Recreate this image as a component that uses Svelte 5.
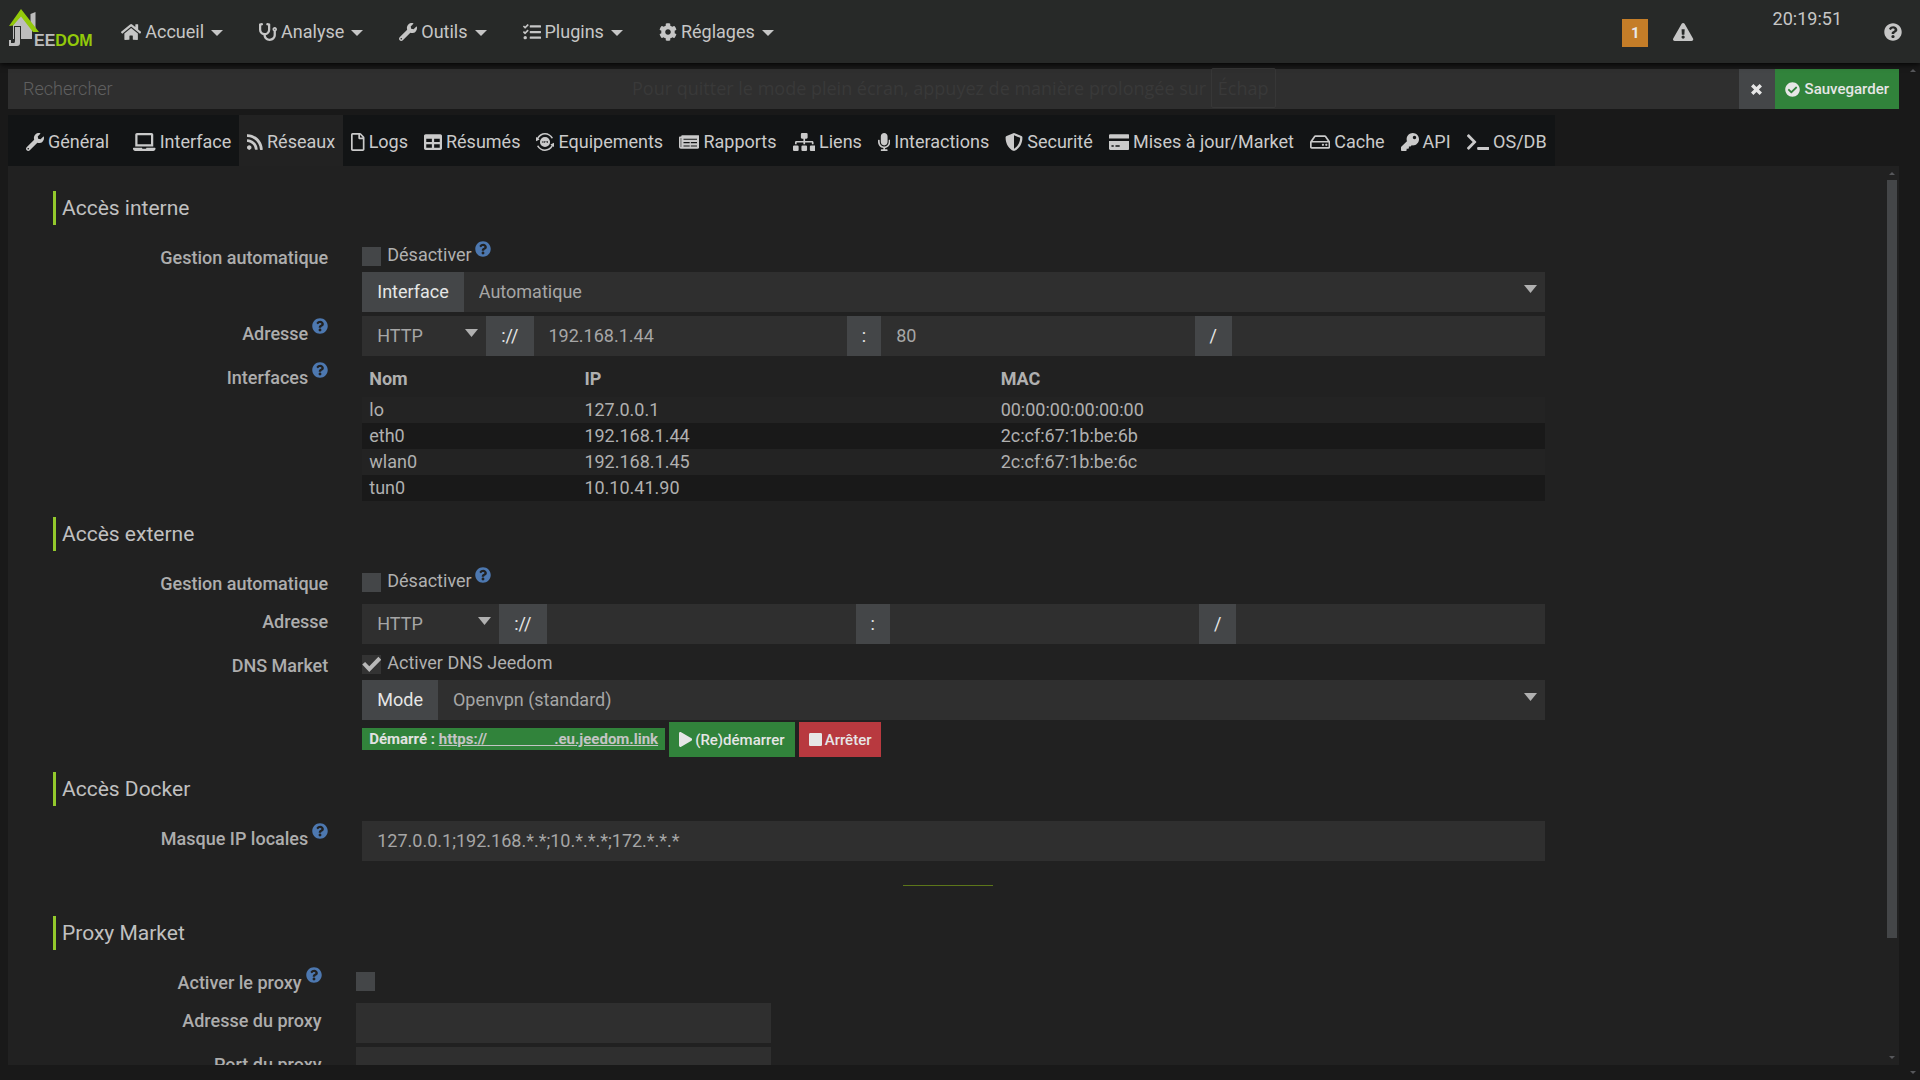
<script>
  const icons = {
    home: ['0 0 576 512', 'M280.37 148.26L96 300.11V464a16 16 0 0 0 16 16l112.06-.29a16 16 0 0 0 15.92-16V368a16 16 0 0 1 16-16h64a16 16 0 0 1 16 16v95.64a16 16 0 0 0 16 16.05L464 480a16 16 0 0 0 16-16V300L295.67 148.26a12.19 12.19 0 0 0-15.3 0zM571.6 251.47L488 182.56V44.05a12 12 0 0 0-12-12h-56a12 12 0 0 0-12 12v72.61L318.47 43a48 48 0 0 0-61 0L4.34 251.47a12 12 0 0 0-1.6 16.9l25.5 31A12 12 0 0 0 45.15 301l235.22-193.74a12.19 12.19 0 0 1 15.3 0L530.9 301a12 12 0 0 0 16.9-1.6l25.5-31a12 12 0 0 0-1.7-16.93z'],
    stethoscope: ['0 0 512 512', 'M447.1 112c-34.2.5-62.3 28.4-63 62.6-.5 24.3 12.5 45.6 32 56.8V344c0 57.3-50.2 104-112 104-60 0-109.2-44.1-111.9-99.2C265 333.8 320 269.2 320 192V36.6c0-11.4-8.1-21.3-19.3-23.5L237.8.5c-13-2.6-25.6 5.8-28.2 18.8L206.4 35c-2.6 13 5.8 25.6 18.8 28.2l30.7 6.1v121.4c0 52.9-42.2 96.7-95.1 97.2-53.4.5-96.9-42.7-96.9-96V69.4l30.7-6.1c13-2.6 21.4-15.2 18.8-28.2l-3.1-15.7C107.7 6.4 95.1-2 82.1.6L19.3 13C8.1 15.3 0 25.1 0 36.6V192c0 77.3 55.1 142 128.1 156.8C130.7 439.2 208.6 512 304 512c97 0 176-75.4 176-168V231.4c19.1-11.1 32-31.7 32-55.4 0-35.7-29.2-64.5-64.9-64zm.9 80c-8.8 0-16-7.2-16-16s7.2-16 16-16 16 7.2 16 16-7.2 16-16 16z'],
    wrench: ['0 0 512 512', 'M507.73 109.1c-2.24-9.03-13.54-12.09-20.12-5.51l-74.36 74.36-67.88-11.31-11.31-67.88 74.36-74.36c6.62-6.62 3.43-17.9-5.66-20.16-47.38-11.74-99.55.91-136.58 37.93-39.64 39.64-50.55 97.1-34.05 147.2L18.74 402.76c-24.99 24.99-24.99 65.51 0 90.5 24.99 24.99 65.51 24.99 90.5 0l213.21-213.21c50.12 16.71 107.47 5.68 147.37-34.22 37.07-37.07 49.7-89.32 37.91-136.73zM64 472c-13.25 0-24-10.75-24-24 0-13.26 10.75-24 24-24s24 10.74 24 24c0 13.25-10.75 24-24 24z'],
    tasks: ['0 0 512 512', 'M139.61 35.5a12 12 0 0 0-17 0L58.93 98.81l-22.7-22.12a12 12 0 0 0-17 0L3.53 92.41a12 12 0 0 0 0 17l47.59 47.4a12.78 12.78 0 0 0 17.61 0l15.59-15.62L156.52 69a12.09 12.09 0 0 0 .09-17zm0 159.19a12 12 0 0 0-17 0l-63.68 63.72-22.7-22.1a12 12 0 0 0-17 0L3.53 252a12 12 0 0 0 0 17L51 316.5a12.77 12.77 0 0 0 17.6 0l15.7-15.69 72.2-72.22a12 12 0 0 0 .09-16.9zM64 368c-26.49 0-48.59 21.5-48.59 48S37.53 464 64 464a48 48 0 0 0 0-96zm432 16H208a16 16 0 0 0-16 16v32a16 16 0 0 0 16 16h288a16 16 0 0 0 16-16v-32a16 16 0 0 0-16-16zm0-320H208a16 16 0 0 0-16 16v32a16 16 0 0 0 16 16h288a16 16 0 0 0 16-16V80a16 16 0 0 0-16-16zm0 160H208a16 16 0 0 0-16 16v32a16 16 0 0 0 16 16h288a16 16 0 0 0 16-16v-32a16 16 0 0 0-16-16z'],
    cog: ['0 0 512 512', 'M487.4 315.7l-42.6-24.6c4.3-23.2 4.3-47 0-70.2l42.6-24.6c4.9-2.8 7.1-8.6 5.5-14-11.1-35.6-30-67.8-54.7-94.6-3.8-4.1-10-5.1-14.8-2.3L380.8 110c-17.9-15.4-38.5-27.3-60.8-35.1V25.8c0-5.6-3.9-10.5-9.4-11.7-36.7-8.2-74.3-7.8-109.2 0-5.5 1.2-9.4 6.1-9.4 11.7V75c-22.2 7.9-42.8 19.8-60.8 35.1L88.7 85.5c-4.9-2.8-11-1.9-14.8 2.3-24.7 26.7-43.6 58.9-54.7 94.6-1.7 5.4.6 11.2 5.5 14L67.3 221c-4.3 23.2-4.3 47 0 70.2l-42.6 24.6c-4.9 2.8-7.1 8.6-5.5 14 11.1 35.6 30 67.8 54.7 94.6 3.8 4.1 10 5.1 14.8 2.3l42.6-24.6c17.9 15.4 38.5 27.3 60.8 35.1v49.2c0 5.6 3.9 10.5 9.4 11.7 36.7 8.2 74.3 7.8 109.2 0 5.5-1.2 9.4-6.1 9.4-11.7v-49.2c22.2-7.9 42.8-19.8 60.8-35.1l42.6 24.6c4.9 2.8 11 1.9 14.8-2.3 24.7-26.7 43.6-58.9 54.7-94.6 1.5-5.5-.7-11.3-5.6-14.1zM256 336c-44.1 0-80-35.9-80-80s35.9-80 80-80 80 35.9 80 80-35.9 80-80 80z'],
    laptop: ['0 0 640 512', 'M624 416H381.54c-.74 19.81-14.71 32-32.74 32H288c-18.69 0-33.02-17.47-32.77-32H16c-8.8 0-16 7.2-16 16v16c0 35.2 28.8 64 64 64h512c35.2 0 64-28.8 64-64v-16c0-8.8-7.2-16-16-16zM576 48c0-26.4-21.6-48-48-48H112C85.6 0 64 21.6 64 48v336h512V48zm-64 272H128V64h384v256z'],
    rss: ['0 0 448 512', 'M128.081 415.959c0 35.369-28.672 64.041-64.041 64.041S0 451.328 0 415.959s28.672-64.041 64.041-64.041 64.04 28.673 64.04 64.041zm175.66 47.25c-8.354-154.6-132.185-278.587-286.95-286.95C7.656 175.765 0 183.105 0 192.253v48.069c0 8.415 6.49 15.472 14.887 16.018 111.832 7.284 201.473 96.702 208.772 208.772.547 8.397 7.604 14.887 16.018 14.887h48.069c9.149.001 16.489-7.655 15.995-16.79zm144.249.288C439.596 229.677 251.465 40.445 16.503 32.01 7.473 31.686 0 38.981 0 48.016v48.068c0 8.625 6.835 15.645 15.453 15.999 191.179 7.839 344.627 161.316 352.465 352.465.353 8.618 7.373 15.453 15.999 15.453h48.068c9.034-.001 16.329-7.474 16.005-16.504z'],
    file: ['0 0 384 512', 'M369.9 97.9L286 14C277 5 264.8-.1 252.1-.1H48C21.5 0 0 21.5 0 48v416c0 26.5 21.5 48 48 48h288c26.5 0 48-21.5 48-48V131.9c0-12.7-5.1-25-14.1-34zM332.1 128H256V51.9l76.1 76.1zM48 464V48h160v104c0 13.3 10.7 24 24 24h104v288H48z'],
    table: ['0 0 512 512', 'M464 32H48C21.49 32 0 53.49 0 80v352c0 26.51 21.49 48 48 48h416c26.51 0 48-21.49 48-48V80c0-26.51-21.49-48-48-48zM224 416H64v-96h160v96zm0-160H64v-96h160v96zm224 160H288v-96h160v96zm0-160H288v-96h160v96z'],
    sync: ['0 0 512 512', 'M256 0C160 0 78 52 34 132L0 112v120l104-50-34-20C106 92 176 44 256 44c80 0 148 44 186 114l44-16C440 58 352 0 256 0zM512 280l-104 50 34 20c-36 70-106 118-186 118S108 424 70 354l-44 16C72 454 160 512 256 512c96 0 178-52 222-132l34 20zM256 112a144 144 0 1 0 0 288 144 144 0 1 0 0-288zM168 226h50v18h-50zM236 226h18v60h-18zM274 226h18v24h26v-24h18v60h-18v-20h-44zM168 268h50v18h-50z'],
    newspaper: ['0 0 576 512', 'M552 64H88c-13 0-24 11-24 24v8H24c-13 0-24 11-24 24v272c0 31 25 56 56 56h472c26 0 48-22 48-48V88c0-13-11-24-24-24zM56 400a8 8 0 0 1-8-8V144h16v248a8 8 0 0 1-8 8zM128 352h176v32H128zM336 352h176v32H336zM128 256h176v32H128zM336 256h176v32H336zM128 160h384v32H128z'],
    sitemap: ['0 0 640 512', 'M128 352H32a32 32 0 0 0-32 32v96a32 32 0 0 0 32 32h96a32 32 0 0 0 32-32v-96a32 32 0 0 0-32-32zm-24-80h192v48h48v-48h192v48h48v-57c0-22-17-39-39-39H344v-64h40a32 32 0 0 0 32-32V32a32 32 0 0 0-32-32H256a32 32 0 0 0-32 32v96a32 32 0 0 0 32 32h40v64H95c-22 0-39 17-39 39v57h48zm264 80h-96a32 32 0 0 0-32 32v96a32 32 0 0 0 32 32h96a32 32 0 0 0 32-32v-96a32 32 0 0 0-32-32zm240 0h-96a32 32 0 0 0-32 32v96a32 32 0 0 0 32 32h96a32 32 0 0 0 32-32v-96a32 32 0 0 0-32-32z'],
    microphone: ['0 0 352 512', 'M176 352c53.02 0 96-42.98 96-96V96c0-53.02-42.98-96-96-96S80 42.98 80 96v160c0 53.02 42.98 96 96 96zm160-160h-16c-8.84 0-16 7.16-16 16v48c0 74.8-64.49 134.82-140.79 127.38C96.71 376.89 48 317.11 48 250.3V208c0-8.84-7.16-16-16-16H16c-8.84 0-16 7.16-16 16v40.16c0 89.64 63.97 169.55 152 181.69V464H96c-8.84 0-16 7.16-16 16v16c0 8.84 7.16 16 16 16h160c8.84 0 16-7.16 16-16v-16c0-8.84-7.16-16-16-16h-56v-33.77C285.71 418.47 352 344.9 352 256v-48c0-8.84-7.16-16-16-16z'],
    shield: ['0 0 512 512', 'M466.5 83.7l-192-80a48.15 48.15 0 0 0-36.9 0l-192 80C27.7 91.1 16 108.6 16 128c0 198.5 114.5 335.7 221.5 380.3 11.8 4.9 25.1 4.9 36.9 0C360.1 472.6 496 349.3 496 128c0-19.4-11.7-36.9-29.5-44.3zM256.1 446.3l-.1-381 175.9 73.3c-3.3 151.4-82.1 261.1-175.8 307.7z'],
    card: ['0 0 576 512', 'M32 32h512a32 32 0 0 1 32 32v90H0V64a32 32 0 0 1 32-32zM0 230h576v218a32 32 0 0 1-32 32H32a32 32 0 0 1-32-32zM70 350v44h64v-44zM184 350v44h120v-44z'],
    hdd: ['0 0 576 512', 'M567.403 235.642L462.323 84.589A48 48 0 0 0 422.919 64H153.081a48 48 0 0 0-39.404 20.589L8.597 235.642A48.001 48.001 0 0 0 0 263.054V400c0 26.51 21.49 48 48 48h480c26.51 0 48-21.49 48-48V263.054c0-9.801-3-19.366-8.597-27.412zM153.081 112h269.838l77.913 112H75.168l77.913-112zM528 400H48V272h480v128zm-32-64c0 17.673-14.327 32-32 32s-32-14.327-32-32 14.327-32 32-32 32 14.327 32 32zm-96 0c0 17.673-14.327 32-32 32s-32-14.327-32-32 14.327-32 32-32 32 14.327 32 32z'],
    key: ['0 0 512 512', 'M512 176.001C512 273.203 433.202 352 336 352c-11.22 0-22.19-1.062-32.827-3.069l-24.012 27.014A23.999 23.999 0 0 1 261.223 384H224v40c0 13.255-10.745 24-24 24h-40v40c0 13.255-10.745 24-24 24H24c-13.255 0-24-10.745-24-24v-78.059c0-6.365 2.529-12.47 7.029-16.971l161.802-161.802C163.108 213.814 160 195.271 160 176 160 78.798 238.797.001 335.999 0 433.488-.001 512 78.511 512 176.001zM336 128c0 26.51 21.49 48 48 48s48-21.49 48-48-21.49-48-48-48-48 21.49-48 48z'],
    terminal: ['0 0 640 512', 'M257.981 272.971L63.638 467.314c-9.373 9.373-24.569 9.373-33.941 0L7.029 444.647c-9.357-9.357-9.375-24.522-.04-33.901L161.011 256 6.99 101.255c-9.335-9.379-9.317-24.544.04-33.901l22.667-22.667c9.373-9.373 24.569-9.373 33.941 0L257.981 239.03c9.373 9.372 9.373 24.568 0 33.941zM640 456v-32c0-13.255-10.745-24-24-24H312c-13.255 0-24 10.745-24 24v32c0 13.255 10.745 24 24 24h304c13.255 0 24-10.745 24-24z'],
    warning: ['0 0 576 512', 'M569.517 440.013C587.975 472.007 564.806 512 527.94 512H48.054c-36.937 0-59.999-40.055-41.577-71.987L246.423 23.985c18.467-32.009 64.72-31.951 83.154 0l239.94 416.028zM288 354c-25.405 0-46 20.595-46 46s20.595 46 46 46 46-20.595 46-46-20.595-46-46-46zm-43.673-165.346l7.418 136c.347 6.364 5.609 11.346 11.982 11.346h48.546c6.373 0 11.635-4.982 11.982-11.346l7.418-136c.375-6.874-5.098-12.654-11.982-12.654h-63.383c-6.884 0-12.356 5.78-11.981 12.654z'],
    question: ['0 0 512 512', 'M504 256c0 136.997-111.043 248-248 248S8 392.997 8 256C8 119.083 119.043 8 256 8s248 111.083 248 248zM262.655 90c-54.497 0-89.255 22.957-116.549 63.758-3.536 5.286-2.353 12.415 2.715 16.258l34.699 26.31c5.205 3.947 12.621 3.008 16.665-2.122 17.864-22.658 30.113-35.797 57.303-35.797 20.429 0 45.698 13.148 45.698 32.958 0 14.976-12.363 22.667-32.534 33.976C247.128 238.528 216 254.941 216 296v4c0 6.627 5.373 12 12 12h56c6.627 0 12-5.373 12-12v-1.333c0-28.462 83.186-29.647 83.186-106.667 0-58.002-60.165-102-116.531-102zM256 338c-25.365 0-46 20.635-46 46 0 25.364 20.635 46 46 46s46-20.636 46-46c0-25.365-20.635-46-46-46z'],
    check: ['0 0 512 512', 'M504 256c0 136.967-111.033 248-248 248S8 392.967 8 256 119.033 8 256 8s248 111.033 248 248zM227.314 387.314l184-184c6.248-6.248 6.248-16.379 0-22.627l-22.627-22.627c-6.248-6.249-16.379-6.249-22.628 0L216 308.118l-70.059-70.059c-6.248-6.248-16.379-6.248-22.628 0l-22.627 22.627c-6.248 6.248-6.248 16.379 0 22.627l104 104c6.249 6.249 16.379 6.249 22.628.001z'],
    times: ['0 0 12 12', 'M2.6 0L6 3.4 9.4 0 12 2.6 8.6 6 12 9.4 9.4 12 6 8.6 2.6 12 0 9.4 3.4 6 0 2.6z'],
    play: ['0 0 448 512', 'M424.4 214.7L72.4 6.6C43.8-10.3 0 6.1 0 47.9V464c0 37.5 40.7 60.1 72.4 41.3l352-208c31.4-18.5 31.5-64.1 0-82.6z'],
    stop: ['0 0 448 512', 'M400 32H48C21.5 32 0 53.5 0 80v352c0 26.5 21.5 48 48 48h352c26.5 0 48-21.5 48-48V80c0-26.5-21.5-48-48-48z'],
    caret: ['0 0 12 6', 'M0 0h12L6 6z'],
    arrow: ['0 0 13 8', 'M0 0h13L6.5 8z'],
    up: ['0 0 6 3', 'M0 3h6L3 0z'],
    down: ['0 0 6 3', 'M0 0h6L3 3z']
  };

  const menu = [
    ['home', 'Accueil'],
    ['stethoscope', 'Analyse'],
    ['wrench', 'Outils'],
    ['tasks', 'Plugins'],
    ['cog', 'Réglages']
  ];

  const tabs = [
    ['wrench', 'Général'],
    ['laptop', 'Interface'],
    ['rss', 'Réseaux'],
    ['file', 'Logs'],
    ['table', 'Résumés'],
    ['sync', 'Equipements'],
    ['newspaper', 'Rapports'],
    ['sitemap', 'Liens'],
    ['microphone', 'Interactions'],
    ['shield', 'Securité'],
    ['card', 'Mises à jour/Market'],
    ['hdd', 'Cache'],
    ['key', 'API'],
    ['terminal', 'OS/DB']
  ];

  const interfaces = [
    ['lo', '127.0.0.1', '00:00:00:00:00:00'],
    ['eth0', '192.168.1.44', '2c:cf:67:1b:be:6b'],
    ['wlan0', '192.168.1.45', '2c:cf:67:1b:be:6c'],
    ['tun0', '10.10.41.90', '']
  ];

  const hiddenHost = '\u00a0'.repeat(18);
  let active = $state('Réseaux');
</script>

{#snippet icon(name, kind = '')}
  <svg class="icon {name} {kind}" viewBox={icons[name][0]} aria-hidden="true">
    <path fill-rule="evenodd" d={icons[name][1]} />
  </svg>
{/snippet}

{#snippet protocol(id)}
  <div class="select">
    <select {id}><option>HTTP</option><option>HTTPS</option></select>
    {@render icon('arrow')}
  </div>
{/snippet}

<div class="page">
  <header>
    <a class="logo" href="#accueil" aria-label="Jeedom">
      <svg viewBox="0 0 86 40" aria-hidden="true">
        <path fill="#bdbdbd" d="M22.5 6l5-2v16h-5zM5 17l8-10 11 13v11H5z" />
        <path fill="#272928" d="M6 18h7v13H6z" />
        <path fill="#bdbdbd" d="M8 14h4v3H8zM7 19h5v16q0 3-3 3H1v-6h2v3h3q1 0 1-2z" />
        <path fill="#93c90a" d="M13 1l18 23h-6L13 8.500 5 17.500 1 18z" />
        <text x="26" y="38" class="mark">EE<tspan class="green">DOM</tspan></text>
      </svg>
    </a>
    <nav class="menu">
      {#each menu as [name, label]}
        <button>{@render icon(name)}<span>{label}</span>{@render icon('caret')}</button>
      {/each}
    </nav>
    <div class="status">
      <span class="badge">1</span>
      <button aria-label="Messages">{@render icon('warning')}</button>
      <time>20:19:51</time>
      <button aria-label="Aide">{@render icon('question')}</button>
    </div>
  </header>

  <div class="body">
    <main>
      <div class="search">
        <input type="text" placeholder="Rechercher" aria-label="Rechercher" />
        <button class="clear" aria-label="Effacer">{@render icon('times')}</button>
        <button class="save">{@render icon('check')}<span>Sauvegarder</span></button>
        <p class="hint">Pour quitter le mode plein écran, appuyez de manière prolongée sur <kbd>Échap</kbd></p>
      </div>

      <div class="tabs" role="tablist">
        {#each tabs as [name, label]}
          <button role="tab" aria-selected={active === label} class:active={active === label} onclick={() => (active = label)}>
            {@render icon(name)}<span>{label}</span>
          </button>
        {/each}
      </div>

      <div class="panel">
        <form>
          <h2>Accès interne</h2>
          <div class="row">
            <label class="name" for="int-auto">Gestion automatique</label>
            <div>
              <div class="check">
                <input type="checkbox" id="int-auto" />
                <label for="int-auto">Désactiver</label>{@render icon('question', 'help')}
              </div>
              <div class="group">
                <label class="addon" for="int-if">Interface</label>
                <div class="select grow">
                  <select id="int-if"><option>Automatique</option></select>
                  {@render icon('arrow')}
                </div>
              </div>
            </div>
          </div>
          <div class="row">
            <label class="name" for="int-proto">Adresse{@render icon('question', 'help')}</label>
            <div class="group address">
              {@render protocol('int-proto')}
              <span class="addon">://</span>
              <input type="text" value="192.168.1.44" aria-label="Hôte interne" />
              <span class="addon">:</span>
              <input type="text" value="80" aria-label="Port interne" />
              <span class="addon">/</span>
              <input type="text" aria-label="Chemin interne" />
            </div>
          </div>
          <div class="row">
            <span class="name">Interfaces{@render icon('question', 'help')}</span>
            <table>
              <thead>
                <tr><th class="c1">Nom</th><th class="c2">IP</th><th>MAC</th></tr>
              </thead>
              <tbody>
                {#each interfaces as cells}
                  <tr>{#each cells as cell}<td>{cell}</td>{/each}</tr>
                {/each}
              </tbody>
            </table>
          </div>

          <h2>Accès externe</h2>
          <div class="row">
            <label class="name" for="ext-auto">Gestion automatique</label>
            <div class="check">
              <input type="checkbox" id="ext-auto" />
              <label for="ext-auto">Désactiver</label>{@render icon('question', 'help')}
            </div>
          </div>
          <div class="row">
            <label class="name" for="ext-proto">Adresse</label>
            <div class="group address wide">
              {@render protocol('ext-proto')}
              <span class="addon">://</span>
              <input type="text" aria-label="Hôte externe" />
              <span class="addon">:</span>
              <input type="text" aria-label="Port externe" />
              <span class="addon">/</span>
              <input type="text" aria-label="Chemin externe" />
            </div>
          </div>
          <div class="row">
            <label class="name" for="dns">DNS Market</label>
            <div>
              <div class="check">
                <input type="checkbox" id="dns" checked />
                <label for="dns">Activer DNS Jeedom</label>
              </div>
              <div class="group">
                <label class="addon" for="dns-mode">Mode</label>
                <div class="select grow">
                  <select id="dns-mode"><option>Openvpn (standard)</option></select>
                  {@render icon('arrow')}
                </div>
              </div>
              <div class="actions">
                <span class="state">Démarré : <a href="#dns">https://{hiddenHost}.eu.jeedom.link</a></span>
                <button type="button" class="start">{@render icon('play')}<span>(Re)démarrer</span></button>
                <button type="button" class="stop-btn">{@render icon('stop')}<span>Arrêter</span></button>
              </div>
            </div>
          </div>

          <h2>Accès Docker</h2>
          <div class="row">
            <label class="name" for="mask">Masque IP locales{@render icon('question', 'help')}</label>
            <input type="text" id="mask" value="127.0.0.1;192.168.*.*;10.*.*.*;172.*.*.*" />
          </div>

          <hr />

          <div class="proxy">
            <h2>Proxy Market</h2>
            <div class="row">
              <label class="name" for="proxy-on">Activer le proxy{@render icon('question', 'help')}</label>
              <div class="check"><input type="checkbox" id="proxy-on" /></div>
            </div>
            <div class="row">
              <label class="name" for="proxy-addr">Adresse du proxy</label>
              <input type="text" id="proxy-addr" />
            </div>
            <div class="row">
              <label class="name" for="proxy-port">Port du proxy</label>
              <input type="text" id="proxy-port" />
            </div>
          </div>
        </form>
        <div class="scroll">
          {@render icon('up')}
          <div class="track"><div class="thumb"></div></div>
          {@render icon('down')}
        </div>
      </div>
    </main>
    <div class="gutter">{@render icon('up')}{@render icon('down')}</div>
  </div>
</div>

<style>
  :global(body) {
    background: #191919;
    font-family: Roboto, 'Liberation Sans', sans-serif;
    font-size: 18px;
    color: #b0b0b0;
  }
  .page {
    display: flex;
    flex-direction: column;
    height: 100vh;
    overflow: hidden;
  }
  button, input, select {
    box-sizing: border-box;
    margin: 0;
    padding: 0;
    border: 0;
    border-radius: 0;
    outline: 0;
    background: none;
    color: inherit;
    font: inherit;
    min-width: 0;
  }
  button {
    display: flex;
    align-items: center;
    cursor: pointer;
  }
  .icon {
    display: block;
    flex: none;
    height: 18px;
    fill: currentColor;
  }
  .icon.caret { height: 6px; width: 12px; margin: 3px 0 0 3px; }
  .icon.help { height: 16px; color: #4d78b0; padding-bottom: 14px; }
  .icon.up, .icon.down { height: 3px; width: 6px; color: #56575a; }

  header {
    display: flex;
    align-items: center;
    flex: none;
    height: 63px;
    padding: 0 18px 0 8px;
    background: #272928;
    color: #c6c6c6;
    box-shadow: 0 1px 6px #000000;
    z-index: 1;
  }
  .logo { width: 86px; margin-right: 27px; padding-bottom: 8px; }
  .logo svg { display: block; height: 40px; width: 86px; }
  .mark { font: 700 16px 'Liberation Sans', sans-serif; fill: #bdbdbd; }
  .mark .green { fill: #93c90a; }
  .menu { display: flex; gap: 36px; flex: 1; }
  .menu button { gap: 4px; }
  .status { display: flex; align-items: center; }
  .badge {
    width: 26px;
    line-height: 28px;
    margin: 3px 25px 0 0;
    background: #c47d28;
    color: #e8e8e8;
    font-size: 15px;
    font-weight: 700;
    text-align: center;
  }
  time { margin: 0 42px 26px 79px; }

  .body { display: flex; flex: 1; min-height: 0; }
  main {
    display: flex;
    flex-direction: column;
    flex: 1;
    min-width: 0;
    padding: 6px 0 15px 8px;
  }
  .gutter {
    display: flex;
    flex-direction: column;
    justify-content: space-between;
    align-items: center;
    box-sizing: border-box;
    width: 21px;
    padding: 6px 0 6px 7px;
  }
  .search { position: relative; display: flex; flex: none; height: 40px; }
  .search input { flex: 1; padding: 0 15px 2px; background: #2f2f2f; }
  .search input::placeholder { color: #606060; font-weight: 300; opacity: 1; }
  .clear { justify-content: center; width: 36px; background: #444648; color: #e6e6e6; }
  .clear .icon { height: 11px; }
  .save { gap: 5px; padding: 0 10px; background: #31833b; color: #e6e6e6; font-size: 15px; font-weight: 500; }
  .save .icon { height: 15px; }
  .hint {
    position: absolute;
    inset: -1px 0 0 33%;
    width: max-content;
    margin: 0;
    line-height: 38px;
    font-family: 'Open Sans', 'Noto Sans', sans-serif;
    font-size: 18px;
    color: #393939;
    pointer-events: none;
  }
  kbd {
    display: inline-block;
    padding: 0 6px;
    border: 1px solid #373737;
    border-radius: 2px;
    font: inherit;
  }

  .tabs {
    display: flex;
    flex: none;
    align-self: flex-start;
    height: 51px;
    margin-top: 6px;
    padding-left: 10px;
    background: #121415;
    color: #cacaca;
  }
  .tabs button { gap: 4px; padding: 2px 8px 0; border-bottom: 1px solid transparent; margin-bottom: -1px; }
  .tabs button:first-child { margin-right: 8px; }
  .tabs .active { background: #222222; border-color: #93c90a; }

  .panel { display: flex; flex: 1; min-height: 0; overflow: hidden; background: #212121; }
  form { flex: 1; min-width: 0; padding-top: 25px; }
  .scroll {
    display: flex;
    flex-direction: column;
    align-items: center;
    gap: 5px;
    width: 10px;
    padding: 6px 2px 6px 0;
  }
  .track { flex: 1; width: 10px; }
  .thumb { height: 87%; background: #444648; }
  h2 {
    margin: 15px 0 15px 45px;
    padding-left: 6px;
    border-left: 3px solid #93c92c;
    line-height: 34px;
    font-size: 21px;
    font-weight: 400;
    color: #c0c0c0;
  }
  form > h2:first-child { margin-top: 0; }
  .row {
    display: grid;
    grid-template-columns: 17% 63%;
    column-gap: 34px;
    margin-bottom: 4px;
    padding-left: 1px;
    align-items: start;
  }
  .row:has(+ h2), .row:has(+ hr) { margin-bottom: 0; }
  .name {
    display: flex;
    align-items: center;
    justify-content: flex-end;
    gap: 4px;
    height: 34px;
    font-weight: 500;
    color: #adadad;
  }
  .row input[type='text'], select {
    height: 40px;
    width: 100%;
    padding: 0 15px 2px;
    background: #2f2f2f;
    color: #a6a6a6;
  }
  .check { display: flex; align-items: center; height: 32px; }
  .check label { margin: 0 3px 0 6px; padding-bottom: 3px; }
  .check input {
    appearance: none;
    width: 19px;
    height: 19px;
    background: #444648;
  }
  .check input:checked { background: #333333; }
  .check input:checked::after {
    content: '';
    display: block;
    height: 19px;
    background: #b8b8b8;
    clip-path: polygon(0 52%, 15% 40%, 37% 62%, 85% 12%, 100% 28%, 37% 92%);
  }
  .group { display: flex; }
  .grow { flex: 1; }
  .address { display: grid; grid-template-columns: 124px auto 1fr auto 1fr auto 1fr; }
  .address.wide { grid-template-columns: 137px auto 1fr auto 1fr auto 1fr; }
  .addon {
    padding: 0 15px;
    line-height: 40px;
    background: #444648;
    color: #e6e6e6;
  }
  .select { display: grid; }
  .select > :global(*) { grid-area: 1 / 1; }
  select { appearance: none; }
  .select .icon {
    width: 13px;
    height: 8px;
    margin: 13px 8px 0 0;
    justify-self: end;
    pointer-events: none;
  }
  table { width: 100%; margin-bottom: 1px; border-collapse: collapse; table-layout: fixed; line-height: 26px; }
  th, td { height: 26px; padding: 0 7px; text-align: left; }
  th { height: 37px; font-weight: 700; }
  .c1 { width: 17%; }
  .c2 { width: 34%; }
  tbody tr { background: #232323; }
  tbody tr:nth-child(even) { background: #191919; }
  .actions { display: flex; align-items: flex-start; gap: 4px; margin-top: 2px; font-size: 15px; font-weight: 500; }
  .state {
    margin-top: 6px;
    padding: 0 7px;
    line-height: 22px;
    background: #31833b;
    color: #e2e2e2;
    font-weight: 700;
    white-space: nowrap;
  }
  .state a { color: #c4c4c4; }
  .actions button { height: 35px; gap: 3px; padding: 0 10px; color: #e6e6e6; }
  .actions .icon { height: 15px; }
  .start { background: #31833b; }
  .stop-btn { background: #b8393f; }
  hr { width: 90px; height: 1px; margin: 24px auto 30px; border: 0; background: #5c761a; }
  .proxy { margin-left: -8px; }
  .proxy h2 { margin-left: 53px; margin-top: 0; }
  .proxy .row { grid-template-columns: 17% 22%; }
</style>
